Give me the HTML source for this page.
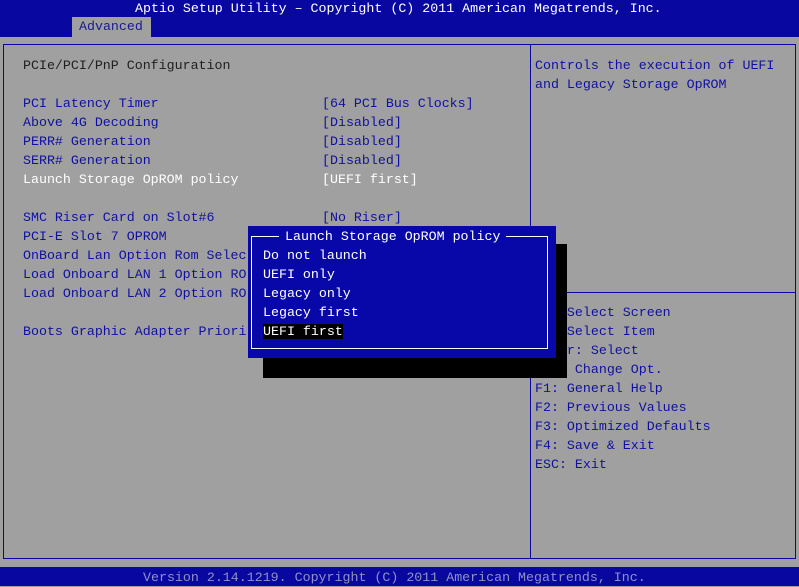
<!DOCTYPE html>
<html><head><meta charset="utf-8"><style>
*{margin:0;padding:0;box-sizing:border-box}
body{width:799px;height:586px;background:#a0a0a0;position:relative;overflow:hidden;font-family:"Liberation Mono","DejaVu Sans Mono",monospace;font-size:13.3px;line-height:19px}
.a{position:absolute;white-space:pre}
.b{color:#1010a0}
.k{color:#202020}
.w{color:#fff}
</style></head><body>
<div class="a" style="left:0;top:0;width:799px;height:37px;background:#0808a0"></div>
<div class="a w" style="left:135px;top:-1px">Aptio Setup Utility – Copyright (C) 2011 American Megatrends, Inc.</div>
<div class="a" style="left:72px;top:17px;width:79px;height:20px;background:#a0a0a0"></div>
<div class="a" style="left:79px;top:17px;color:#1a1a90">Advanced</div>
<div class="a" style="left:3px;top:44px;width:793px;height:515px;border:1px solid #0808a0"></div>
<div class="a" style="left:530px;top:44px;width:1px;height:515px;background:#0808a0"></div>
<div class="a" style="left:530px;top:292px;width:266px;height:1px;background:#0808a0"></div>
<div class="a k" style="left:23px;top:56px">PCIe/PCI/PnP Configuration</div>
<div class="a b" style="left:23px;top:94px">PCI Latency Timer
Above 4G Decoding
PERR# Generation
SERR# Generation
<span class="w">Launch Storage OpROM policy</span>

SMC Riser Card on Slot#6
PCI-E Slot 7 OPROM
OnBoard Lan Option Rom Selec
Load Onboard LAN 1 Option RO
Load Onboard LAN 2 Option RO

Boots Graphic Adapter Priori</div>
<div class="a b" style="left:322px;top:94px">[64 PCI Bus Clocks]
[Disabled]
[Disabled]
[Disabled]
<span class="w">[UEFI first]</span>

[No Riser]</div>
<div class="a b" style="left:535px;top:56px">Controls the execution of UEFI
and Legacy Storage OpROM</div>
<div class="a b" style="left:535px;top:303px">    Select Screen
    Select Item
    r: Select
     Change Opt.
F1: General Help
F2: Previous Values
F3: Optimized Defaults
F4: Save &amp; Exit
ESC: Exit</div>
<div class="a" style="left:263px;top:244px;width:304px;height:134px;background:#000"></div>
<div class="a" style="left:248px;top:226px;width:308px;height:132px;background:#0808a8"></div>
<div class="a" style="left:251px;top:236px;width:297px;height:113px;border:1px solid #fff"></div>
<div class="a w" style="left:279px;top:227px;background:#0808a8;padding:0 6px">Launch Storage OpROM policy</div>
<div class="a w" style="left:263px;top:246px">Do not launch
UEFI only
Legacy only
Legacy first
<span style="background:#000">UEFI first</span></div>
<div class="a" style="left:0;top:567px;width:799px;height:19px;background:#0808a0"></div>
<div class="a" style="left:143px;top:568px;color:#9090c8">Version 2.14.1219. Copyright (C) 2011 American Megatrends, Inc.</div>
</body></html>
